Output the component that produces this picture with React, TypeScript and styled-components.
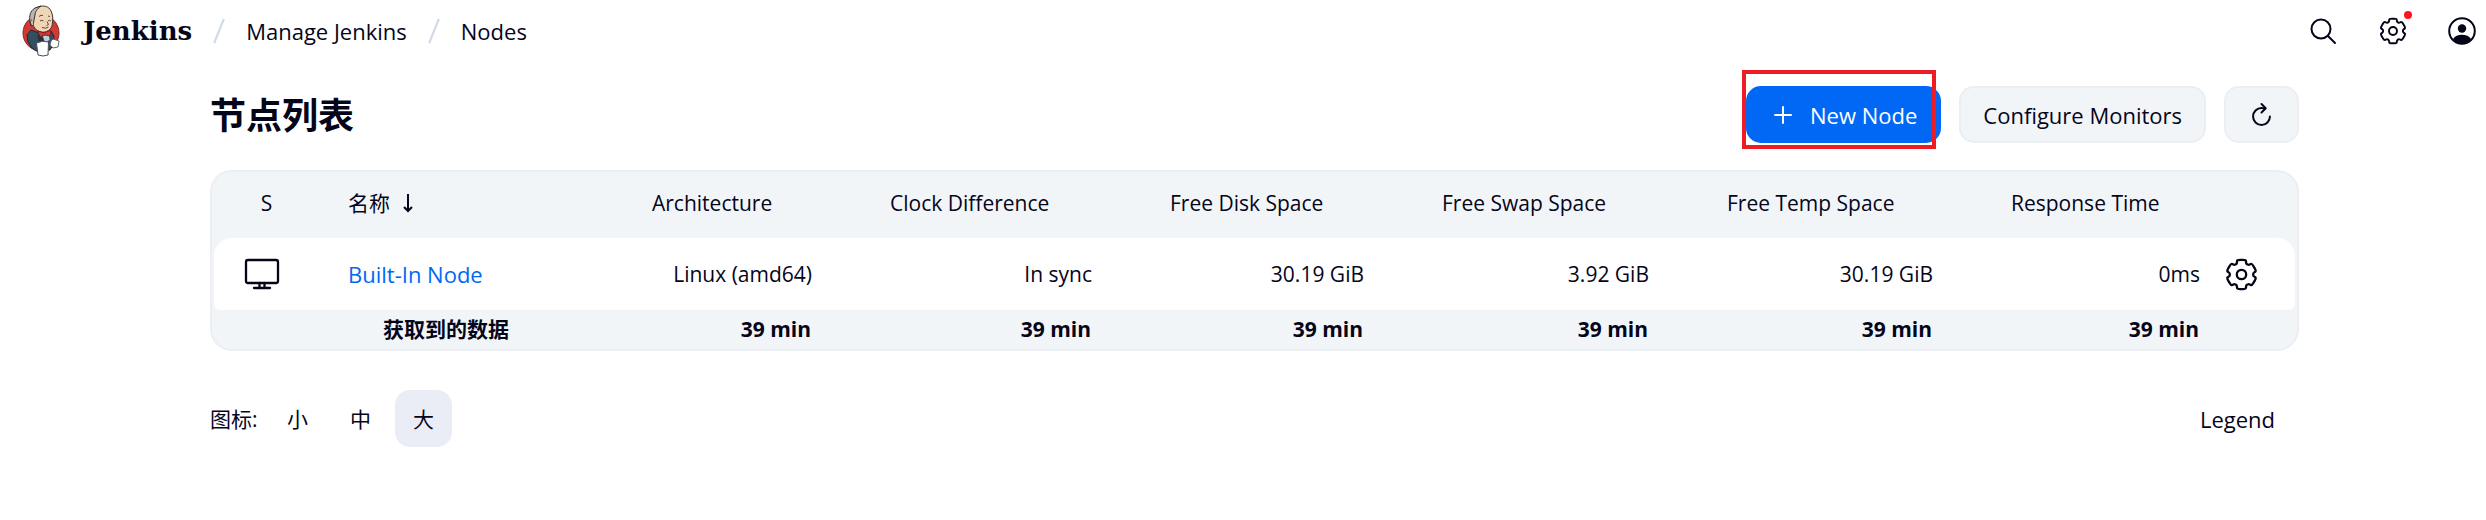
import React from "react";
import styled, { createGlobalStyle, css } from "styled-components";

const ink = "#05051a";
const panel = "#f2f5f8";
const edge = "#ebeff4";
const blue = "#0068f5";
const sans = `"Open Sans", "Noto Sans CJK SC", sans-serif`;

const GlobalStyle = createGlobalStyle`
  *, *::before, *::after { box-sizing: border-box; }
  body { margin: 0; background: #fff; color: ${ink}; font: 400 22px/30px ${sans}; }
  button { font: inherit; color: inherit; border: 0; background: none; padding: 0; cursor: pointer; }
  a { color: inherit; text-decoration: none; }
  svg { display: block; flex: none; }
`;

const Header = styled.header`
  display: flex;
  align-items: center;
  justify-content: space-between;
  height: 62px;
  padding: 0 10px 0 22px;
`;

const Breadcrumbs = styled.nav`
  display: flex;
  align-items: center;
  gap: 21px;
`;

const Brand = styled.a`
  display: flex;
  align-items: center;
  gap: 22px;
  font: 700 26px/30px "DejaVu Serif", serif;
`;

const HeaderActions = styled.div`
  display: flex;
  align-items: center;
  gap: 41px;
`;

const IconButton = styled.button`
  position: relative;
  display: flex;
  align-items: center;
  justify-content: center;
`;

const AlertDot = styled.span`
  position: absolute;
  top: -6px;
  right: -5px;
  width: 8px;
  height: 8px;
  border-radius: 50%;
  background: #ff1420;
`;

const Main = styled.main`
  padding: 24px 187px 0 210px;
`;

const TitleBar = styled.div`
  display: flex;
  align-items: center;
  justify-content: space-between;
  margin-bottom: 27px;
`;

const Title = styled.h1`
  margin: 0;
  padding-top: 2px;
  font-size: 36px;
  line-height: 48px;
  font-weight: 700;
`;

const Actions = styled.div`
  display: flex;
  gap: 18px;
`;

const Button = styled.button<{ $primary?: boolean }>`
  display: flex;
  align-items: center;
  justify-content: center;
  gap: 18px;
  height: 57px;
  padding: 0 24px;
  border-radius: 15px;
  white-space: nowrap;
  ${(p) =>
    p.$primary
      ? css`
          background: ${blue};
          color: #fff;
        `
      : css`
          background: ${panel};
          box-shadow: inset 0 0 0 2px ${edge};
        `}
`;

const Highlighted = styled.div`
  position: relative;
  display: flex;
  &::after {
    content: "";
    position: absolute;
    inset: -16px 5px -6px -4px;
    border: 4px solid #ee1c25;
    pointer-events: none;
  }
`;

const TablePanel = styled.div`
  padding: 2px 4px;
  background: ${panel};
  border-radius: 22px;
  box-shadow: inset 0 0 0 2px ${edge};
`;

const Table = styled.table`
  width: 100%;
  table-layout: fixed;
  border-collapse: separate;
  border-spacing: 0;
  white-space: nowrap;
  font-size: 21px;
`;

const HeadCell = styled.th<{ $center?: boolean }>`
  height: 66px;
  padding: 0 0 4px ${(p) => (p.$center ? "10px" : "39px")};
  font-weight: 400;
  text-align: ${(p) => (p.$center ? "center" : "left")};
`;

const SortButton = styled.button`
  display: flex;
  align-items: center;
  gap: 12px;
`;

const Cell = styled.td<{ $align?: "left" | "right"; $tight?: boolean }>`
  height: 72px;
  padding: 0 ${(p) => (p.$tight ? "15px" : "39px")} 0 39px;
  background: #fff;
  text-align: ${(p) => p.$align ?? "right"};
  &:first-child {
    padding: 0 0 0 30px;
    border-radius: 18px 0 0 6px;
  }
  &:last-child {
    padding: 0 0 0 10px;
    border-radius: 0 18px 6px 0;
  }
`;

const NodeLink = styled.a`
  color: ${blue};
  font-size: 22px;
`;

const FootCell = styled.td<{ $label?: boolean; $tight?: boolean }>`
  height: 39px;
  padding: 0 ${(p) => (p.$tight ? "16px" : "40px")} 2px ${(p) => (p.$label ? "74px" : "0")};
  font-weight: 700;
  text-align: ${(p) => (p.$label ? "left" : "right")};
`;

const Footer = styled.div`
  display: flex;
  align-items: center;
  justify-content: space-between;
  margin-top: 39px;
`;

const SizePicker = styled.div`
  display: flex;
  align-items: center;
  gap: 6px;
  font-size: 21px;
`;

const SizeLabel = styled.span`
  width: 53px;
`;

const SizeButton = styled.button<{ $active?: boolean }>`
  width: 57px;
  height: 57px;
  border-radius: 15px;
  background: ${(p) => (p.$active ? "#eaedf5" : "transparent")};
`;

const LegendButton = styled.button`
  height: 57px;
  padding: 0 24px;
`;

const Slash = () => (
  <svg width="12" height="26" viewBox="0 0 12 26" aria-hidden="true">
    <path d="M10.800 1 1.200 25" stroke="#d0dae8" strokeWidth="2.200" fill="none" />
  </svg>
);

// Six-toothed gear outline: a polygon in polar coordinates with every corner rounded.
const gearPath = (() => {
  const vertices: [number, number][] = [];
  for (let tooth = 0; tooth < 6; tooth++) {
    for (const [angle, radius] of [[-17, 15.2], [17, 15.2], [23, 11.8], [37, 11.8]]) {
      const a = ((tooth * 60 + angle - 90) * Math.PI) / 180;
      vertices.push([Math.cos(a) * radius, Math.sin(a) * radius]);
    }
  }
  const between = (p: number[], q: number[], t: number) =>
    `${(p[0] + (q[0] - p[0]) * t).toFixed(2)} ${(p[1] + (q[1] - p[1]) * t).toFixed(2)}`;
  return (
    vertices
      .map((v, i) => {
        const before = vertices[(i + vertices.length - 1) % vertices.length];
        const after = vertices[(i + 1) % vertices.length];
        return `${i ? "L" : "M"}${between(v, before, 0.35)}Q${v[0].toFixed(2)} ${v[1].toFixed(2)} ${between(v, after, 0.35)}`;
      })
      .join("") + "Z"
  );
})();

const Gear = ({ size, stroke }: { size: number; stroke: number }) => (
  <svg width={size} height={size} viewBox="-16.500 -16.500 33 33" fill="none" stroke="currentColor" strokeWidth={stroke} strokeLinejoin="round" aria-hidden="true">
    <path d={gearPath} />
    <circle r="4.700" />
  </svg>
);

const JenkinsLogo = () => (
  <svg width="39" height="52" viewBox="0 0 39 52" aria-hidden="true">
    <ellipse cx="19" cy="28" rx="18" ry="18" fill="#d33833" stroke="#7e2a2c" />
    <path d="M9 25 5 30 6 37 9 42 14 46 28 45 31 40 32 31 29 26 20 29Z" fill="#335061" stroke="#1d2a33" />
    <path d="M9 14C9 9 11 4 16 2c5-2 11-1 13 4 2 4 2 8 1.500 12-.4 5-3 8-7.500 9-5 1-10-2-12-7Z" fill="#f0d6b7" stroke="#3a3433" />
    <path d="M8 17c-1-6 0-11 5-14l6-2c-4 3-6 6-6 9l-1 5-1 5-2 1Z" fill="#b9b4b0" stroke="#3a3433" />
    <path d="M10 15c-2 0-2 5 1 6" fill="#f0d6b7" stroke="#3a3433" />
    <path d="M18 16q2-1.500 3.500 0M26 16q1.500-1.500 3 0M17 11.500q2-2 4-1M26 11l2 .5M25 16.500l1.500 3-2 1M20 22.500q4 1.500 6.500-.5" fill="none" stroke="#5a4a43" />
    <path d="m15 29 6 4 2 7-6-1Z" fill="#23343f" />
    <path d="m20 30 7-1 1 6-5 3Z" fill="#b7d2de" stroke="#1d2a33" strokeWidth=".5" />
    <path d="m16 26 6 2 6-3 1 6-6-1-5 2Z" fill="#d33833" stroke="#7b1d20" />
    <path d="m29 36 2-2 6 2-1 6-5 1-3-3Z" fill="#fff" stroke="#5b6770" />
    <path d="M14.500 38q6-3 12-1l-.5 13q-5 2-10 0Z" fill="#fff" stroke="#4a4f55" />
  </svg>
);

const metrics = ["Architecture", "Clock Difference", "Free Disk Space", "Free Swap Space", "Free Temp Space", "Response Time"];
const values = ["Linux (amd64)", "In sync", "30.19 GiB", "3.92 GiB", "30.19 GiB", "0ms"];
const columns = [95, 304, 238, 280, 272, 285, 284, 243, 80];

export default function App() {
  return (
    <>
      <GlobalStyle />
      <Header>
        <Breadcrumbs aria-label="Breadcrumb">
          <Brand href="#home">
            <JenkinsLogo />
            Jenkins
          </Brand>
          <Slash />
          <a href="#manage">Manage Jenkins</a>
          <Slash />
          <a href="#nodes">Nodes</a>
        </Breadcrumbs>
        <HeaderActions>
          <IconButton aria-label="Search">
            <svg width="30" height="30" viewBox="0 0 30 30" fill="none" stroke="currentColor" strokeWidth="2" strokeLinecap="round" aria-hidden="true">
              <circle cx="13" cy="13" r="9.500" />
              <path d="m20 20 7 7" />
            </svg>
          </IconButton>
          <IconButton aria-label="Manage Jenkins">
            <Gear size={28} stroke={2.3} />
            <AlertDot />
          </IconButton>
          <IconButton aria-label="Account">
            <svg width="28" height="28" viewBox="0 0 28 28" aria-hidden="true">
              <circle cx="14" cy="14" r="12.800" fill="none" stroke="currentColor" strokeWidth="2" />
              <circle cx="14" cy="11.500" r="4.200" fill="currentColor" />
              <path d="M5 22c2-3 5-4.300 9-4.300s7 1.300 9 4.300c-2 3-5 5-9 5s-7-2-9-5Z" fill="currentColor" />
            </svg>
          </IconButton>
        </HeaderActions>
      </Header>
      <Main>
        <TitleBar>
          <Title>节点列表</Title>
          <Actions>
            <Highlighted>
              <Button $primary>
                <svg width="22" height="22" viewBox="0 0 22 22" fill="none" stroke="currentColor" strokeWidth="2" strokeLinecap="round" aria-hidden="true">
                  <path d="M13 3v16M5 11h16" />
                </svg>
                New Node
              </Button>
            </Highlighted>
            <Button>Configure Monitors</Button>
            <Button aria-label="Refresh">
              <svg width="27" height="27" viewBox="0 0 512 512" fill="none" stroke="currentColor" strokeWidth="38" strokeLinecap="round" strokeLinejoin="round" aria-hidden="true">
                <path d="M320 146s24.360-12-64-12a160 160 0 1 0 160 160" />
                <path d="m256 58 80 80-80 80" />
              </svg>
            </Button>
          </Actions>
        </TitleBar>
        <TablePanel>
          <Table>
            <colgroup>
              {columns.map((width, i) => (
                <col key={i} width={width} />
              ))}
            </colgroup>
            <thead>
              <tr>
                <HeadCell scope="col" $center>S</HeadCell>
                <HeadCell scope="col">
                  <SortButton>
                    名称
                    <svg width="12" height="20" viewBox="0 0 12 20" fill="none" stroke="currentColor" strokeWidth="2" aria-hidden="true">
                      <path d="M6 1v17M2 14l4 4 4-4" />
                    </svg>
                  </SortButton>
                </HeadCell>
                {metrics.map((name) => (
                  <HeadCell key={name} scope="col">{name}</HeadCell>
                ))}
                <HeadCell as="td" />
              </tr>
            </thead>
            <tbody>
              <tr>
                <Cell $align="left">
                  <svg width="36" height="36" viewBox="0 0 36 36" fill="none" stroke="currentColor" strokeWidth="2.300" strokeLinecap="round" strokeLinejoin="round" role="img" aria-label="Online">
                    <rect x="2" y="4" width="32" height="23" rx="2" />
                    <path d="M15.500 27v5M20.500 27v5M10 32h16" />
                  </svg>
                </Cell>
                <Cell $align="left">
                  <NodeLink href="#built-in">Built-In Node</NodeLink>
                </Cell>
                {values.map((value, i) => (
                  <Cell key={i} $tight={i === values.length - 1}>{value}</Cell>
                ))}
                <Cell $align="left">
                  <IconButton aria-label="Configure node">
                    <Gear size={33} stroke={2.3} />
                  </IconButton>
                </Cell>
              </tr>
            </tbody>
            <tfoot>
              <tr>
                <FootCell />
                <FootCell $label>获取到的数据</FootCell>
                {metrics.map((name, i) => (
                  <FootCell key={name} $tight={i === metrics.length - 1}>39 min</FootCell>
                ))}
                <FootCell />
              </tr>
            </tfoot>
          </Table>
        </TablePanel>
        <Footer>
          <SizePicker>
            <SizeLabel>图标:</SizeLabel>
            <SizeButton>小</SizeButton>
            <SizeButton>中</SizeButton>
            <SizeButton $active>大</SizeButton>
          </SizePicker>
          <LegendButton>Legend</LegendButton>
        </Footer>
      </Main>
    </>
  );
}
